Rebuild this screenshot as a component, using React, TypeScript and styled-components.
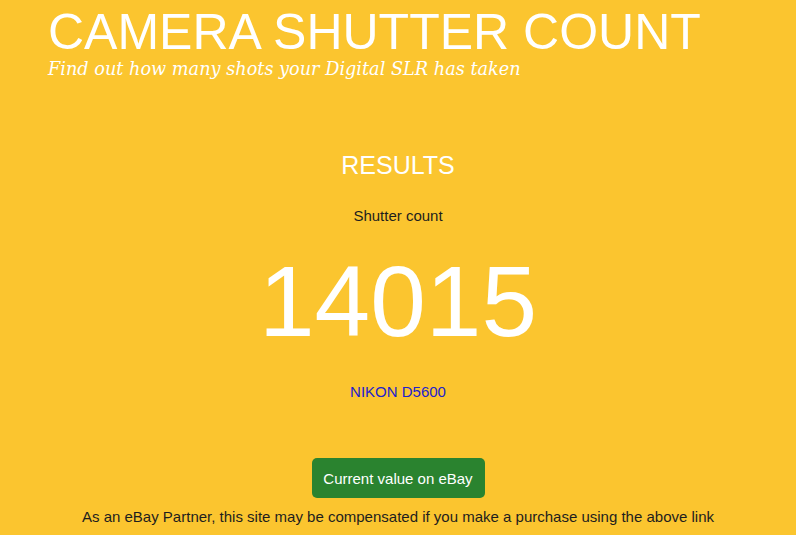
import React from 'react';
import styled, { createGlobalStyle } from 'styled-components';

const GlobalStyle = createGlobalStyle`
  html, body {
    margin: 0;
    padding: 0;
    background: #fbc52f;
  }
  body {
    font-family: "Liberation Sans", Arial, sans-serif;
  }
`;

const Page = styled.div`
  width: 796px;
  height: 535px;
  overflow: hidden;
  background: #fbc52f;
`;

const Header = styled.header`
  padding: 5px 0 0 48px;
`;

const Title = styled.h1`
  margin: 0;
  font-size: 50px;
  font-weight: 400;
  line-height: 54px;
  color: #fff;
`;

const Tagline = styled.p`
  margin: 0;
  font-family: "DejaVu Serif", "Liberation Serif", serif;
  font-style: italic;
  font-size: 17.7px;
  line-height: 20px;
  color: #fff;
`;

const Results = styled.section`
  display: flex;
  flex-direction: column;
  align-items: center;
  padding-top: 71px;
`;

const ResultsHeading = styled.h2`
  margin: 0;
  font-size: 25px;
  font-weight: 400;
  line-height: 30px;
  color: #fff;
`;

const Label = styled.div`
  margin-top: 27px;
  font-size: 15px;
  color: #1e1e1e;
`;

const Count = styled.div`
  margin-top: 22px;
  font-size: 100px;
  line-height: 110px;
  color: #fff;
`;

const CameraLink = styled.a`
  margin-top: 27px;
  font-size: 15px;
  color: #2222cc;
  text-decoration: none;
`;

const EbayButton = styled.a`
  margin-top: 58px;
  display: flex;
  align-items: center;
  justify-content: center;
  width: 173px;
  height: 40px;
  border-radius: 5px;
  background: #2a832f;
  color: #fff;
  font-size: 15px;
  text-decoration: none;
`;

const Disclaimer = styled.p`
  margin: 10px 0 0;
  font-size: 15px;
  color: #1e1e1e;
`;

export default function App() {
  return (
    <Page>
      <GlobalStyle />
      <Header>
        <Title>CAMERA SHUTTER COUNT</Title>
        <Tagline>Find out how many shots your Digital SLR has taken</Tagline>
      </Header>
      <Results>
        <ResultsHeading>RESULTS</ResultsHeading>
        <Label>Shutter count</Label>
        <Count>14015</Count>
        <CameraLink href="#">NIKON D5600</CameraLink>
        <EbayButton href="#">Current value on eBay</EbayButton>
        <Disclaimer>
          As an eBay Partner, this site may be compensated if you make a purchase using the above link
        </Disclaimer>
      </Results>
    </Page>
  );
}
